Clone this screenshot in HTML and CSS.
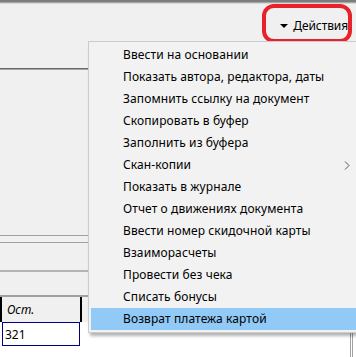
FILE: index.html
```html
<!DOCTYPE html>
<html>

<head>
    <title>Документ</title>
    <meta charset="utf-8">
    <link rel="stylesheet" href="styles.css">
</head>

<body>
    <div class="okno">
        <div class="shapka"></div>

        <div class="panel">
            <button class="deistviya"><span class="treug"></span>Действия</button>
        </div>
        <div class="razdel"></div>

        <div class="forma">
            <div class="polosa polosa-1"></div>
            <div class="polosa polosa-2"></div>
            <div class="polosa polosa-3"></div>
        </div>

        <div class="tablica">
            <div class="pole">
                <div class="zagolovok">
                    <div class="kolonka">Ост.</div>
                </div>
                <div class="stroka">
                    <div class="yacheika">321</div>
                </div>
            </div>
        </div>
    </div>

    <!-- отметка вокруг кнопки -->
    <div class="obvodka"></div>

    <!-- выпадающее меню действий -->
    <ul class="menu">
        <li>Ввести на основании</li>
        <li>Показать автора, редактора, даты</li>
        <li>Запомнить ссылку на документ</li>
        <li>Скопировать в буфер</li>
        <li>Заполнить из буфера</li>
        <li class="podmenu">Скан-копии
            <svg class="strelka" width="6" height="9" viewBox="0 0 6 9">
                <polyline points="1,0.5 5,4.5 1,8.5" fill="none" stroke="#555" stroke-width="1"/>
            </svg>
        </li>
        <li>Показать в журнале</li>
        <li>Отчет о движениях документа</li>
        <li>Ввести номер скидочной карты</li>
        <li>Взаиморасчеты</li>
        <li>Провести без чека</li>
        <li>Списать бонусы</li>
        <li class="vybran">Возврат платежа картой</li>
    </ul>
</body>

</html>
```

FILE: styles.css
```css
* {
    box-sizing: border-box;
}

body {
    margin: 0;
    width: 356px;
    height: 357px;
    overflow: hidden;
    background: #f0f0f0;
    font-family: "Noto Sans", "Open Sans", sans-serif;
    font-size: 12px;
    color: #000;
}

.okno {
    display: flex;
    flex-direction: column;
    height: 357px;
}

.shapka {
    height: 4px;
    border-top: 2px solid #7c7c7c;
    border-bottom: 1px solid #d6d6d6;
    background: #a8a8a8;
}

.panel {
    height: 64px;
    display: flex;
    justify-content: flex-end;
    align-items: flex-start;
    padding: 13px 8px 0 0;
}

.deistviya {
    display: flex;
    align-items: center;
    gap: 5px;
    border: none;
    background: none;
    padding: 0;
    font: inherit;
    letter-spacing: -0.1px;
    color: #000;
}

.treug {
    width: 0;
    height: 0;
    border-left: 4px solid transparent;
    border-right: 4px solid transparent;
    border-top: 4px solid #000;
}

.razdel {
    height: 2px;
    border-top: 1px solid #6a6a6a;
    background: #a6a6a6;
}

.forma {
    height: 225px;
    display: flex;
    flex-direction: column;
    padding-top: 165px;
}

.polosa {
    height: 1px;
    background: #a0a0a0;
}

.polosa-2 {
    margin-top: 6px;
}

.polosa-3 {
    margin-top: 27px;
    height: 2px;
    background: #b4b4b4;
}

.tablica {
    flex: 1;
    display: flex;
    background: #fff;
    border-top: 2px solid #a0a0a0;
}

.pole {
    flex: 1;
    margin-right: 3px;
    border-right: 3px double #a0a0a0;
}

.zagolovok {
    height: 25px;
    background: #f0f0f0;
    display: flex;
}

.kolonka {
    width: 82px;
    height: 25px;
    padding: 4px 5px;
    border-left: 2px solid #000;
    border-right: 2px solid #000;
    font-style: italic;
}

.stroka {
    display: flex;
    padding-left: 2px;
}

.yacheika {
    width: 78px;
    height: 24px;
    padding: 3px 2px;
    border: 1px solid #000080;
    background: #fff;
}

.obvodka {
    position: absolute;
    left: 262px;
    top: 4px;
    width: 90px;
    height: 39px;
    border: 4px solid #e8212b;
    border-radius: 12px;
}

.menu {
    position: absolute;
    left: 88px;
    top: 41px;
    width: 268px;
    margin: 0;
    padding: 2px 0 2px 2px;
    list-style: none;
    background: #f2f2f2;
    border: 1px solid #cccccc;
    border-right: none;
    box-shadow: 2px 3px 3px rgba(0, 0, 0, 0.3);
    letter-spacing: 0.1px;
}

.menu li {
    height: 22px;
    line-height: 22px;
    padding-left: 32px;
    position: relative;
}

.menu .vybran {
    background: #91c9f7;
}

.strelka {
    position: absolute;
    left: 253px;
    top: 7px;
}
```
